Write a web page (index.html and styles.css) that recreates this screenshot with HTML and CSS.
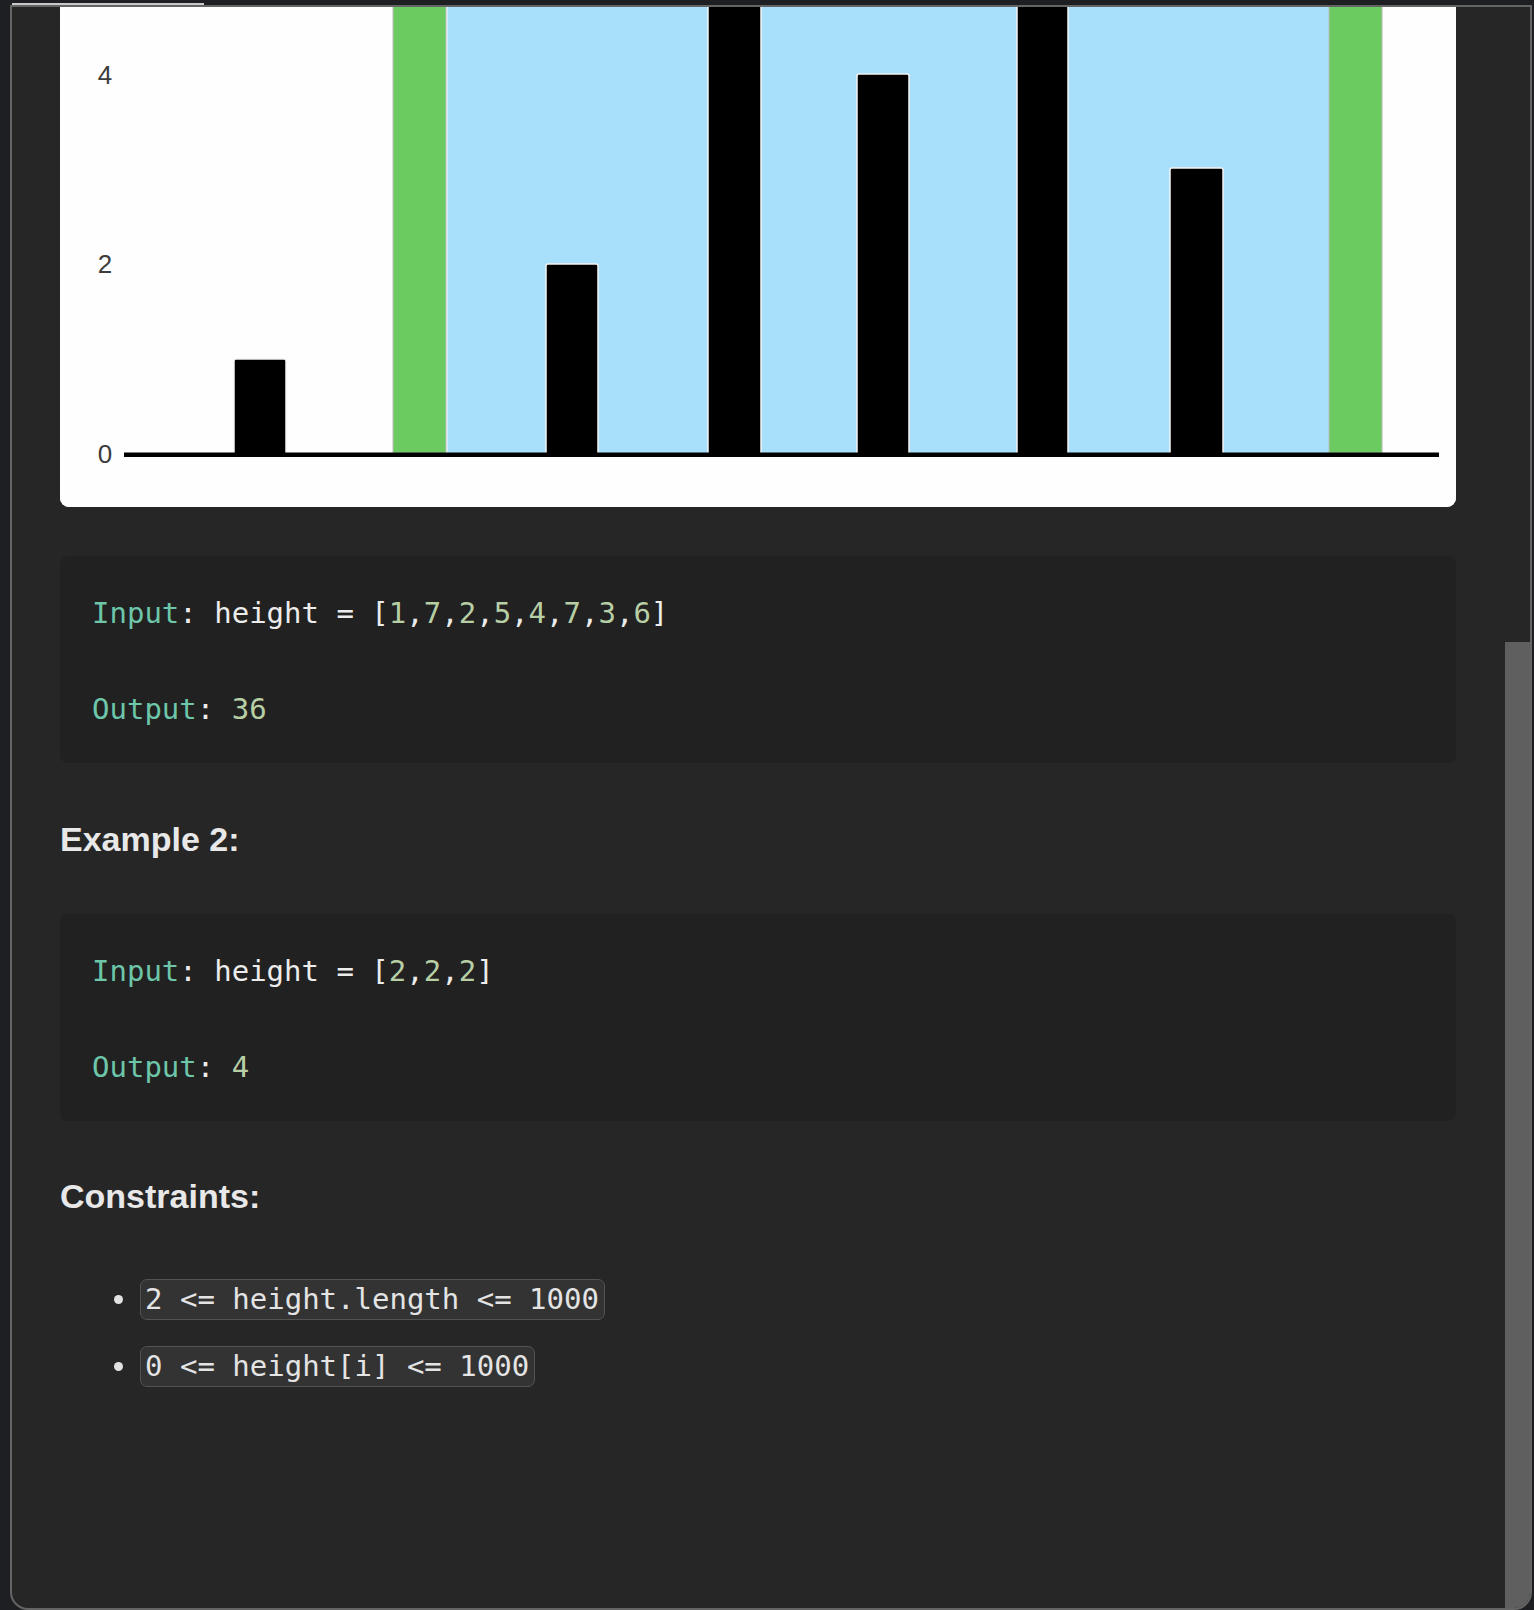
FILE: index.html
```html
<!DOCTYPE html>
<html lang="en">
<head>
<meta charset="utf-8">
<title>Container With Most Water</title>
<link rel="stylesheet" href="styles.css">
</head>
<body>
  <div class="top-strip"><div class="top-thumb"></div></div>
  <div class="panel">
    <div class="content">
      <div class="figure">
        <svg class="chart" width="1396" height="500" viewBox="0 0 1396 500" xmlns="http://www.w3.org/2000/svg">
          <rect x="0" y="0" width="1396" height="500" fill="#fefefe"/>
          <text class="axis" x="45" y="77" text-anchor="middle">4</text>
          <text class="axis" x="45" y="266" text-anchor="middle">2</text>
          <text class="axis" x="45" y="456" text-anchor="middle">0</text>
          <rect x="387.5" y="0" width="882" height="446" fill="#a8dffa"/>
          <rect x="333" y="-20" width="53" height="466" fill="#6bcb60" stroke="#b9b9b9" stroke-width="1"/>
          <rect x="1269" y="-20" width="53" height="466" fill="#6bcb60" stroke="#b9b9b9" stroke-width="1"/>
          <g fill="#000" stroke="#f4f4f4" stroke-width="1.5">
            <rect x="174" y="352" width="52" height="96" rx="2"/>
            <rect x="486" y="257" width="52" height="191" rx="2"/>
            <rect x="648" y="-20" width="53" height="468" rx="2"/>
            <rect x="797" y="67" width="52" height="381" rx="2"/>
            <rect x="957" y="-20" width="51" height="468" rx="2"/>
            <rect x="1110" y="161" width="53" height="287" rx="2"/>
          </g>
          <rect x="64" y="445.5" width="1315" height="4.5" fill="#000"/>
        </svg>
      </div>

      <pre class="code-block"><span class="kw">Input</span>: height = [<span class="num">1</span>,<span class="num">7</span>,<span class="num">2</span>,<span class="num">5</span>,<span class="num">4</span>,<span class="num">7</span>,<span class="num">3</span>,<span class="num">6</span>]

<span class="kw">Output</span>: <span class="num">36</span></pre>

      <h3 class="section-title">Example 2:</h3>

      <pre class="code-block"><span class="kw">Input</span>: height = [<span class="num">2</span>,<span class="num">2</span>,<span class="num">2</span>]

<span class="kw">Output</span>: <span class="num">4</span></pre>

      <h3 class="section-title">Constraints:</h3>

      <ul class="constraints">
        <li><code class="inline-code">2 &lt;= height.length &lt;= 1000</code></li>
        <li><code class="inline-code">0 &lt;= height[i] &lt;= 1000</code></li>
      </ul>
    </div>
    <div class="scrollbar"><div class="thumb"></div></div>
  </div>
</body>
</html>
```

FILE: styles.css
```css
* {
  box-sizing: border-box;
}

html, body {
  margin: 0;
  padding: 0;
}

body {
  width: 1534px;
  height: 1610px;
  overflow: hidden;
  background: #1e1f22;
  font-family: "Liberation Sans", Arial, sans-serif;
}

.top-strip {
  height: 5px;
  padding-top: 3px;
  padding-left: 12px;
}

.top-thumb {
  width: 192px;
  height: 2px;
  background: #c8c8c8;
}

.panel {
  margin-left: 10px;
  width: 1522px;
  height: 1605px;
  border: 2px solid #646464;
  border-radius: 0 0 18px 18px;
  background: #262626;
  overflow: hidden;
  display: flex;
}

.content {
  flex: 1;
  padding: 0 49px 0 48px;
  display: flex;
  flex-direction: column;
}

.figure {
  width: 1396px;
  height: 500px;
  background: #fefefe;
  border-radius: 0 0 9px 9px;
  overflow: hidden;
  flex: none;
}

.chart {
  display: block;
}

.axis {
  font-family: "Liberation Sans", Arial, sans-serif;
  font-size: 26px;
  fill: #3c3c3c;
}

.code-block {
  margin: 49px 0 0 0;
  padding: 33px 32px 30px 32px;
  background: #212121;
  border-radius: 8px;
  font-family: "DejaVu Sans Mono", "Liberation Mono", monospace;
  font-size: 29px;
  line-height: 48px;
  color: #ececec;
  white-space: pre;
}

.section-title + .code-block {
  margin-top: 55px;
}

.kw {
  color: #6dc6a9;
}

.num {
  color: #b8cfa6;
}

.section-title {
  margin: 56px 0 0 0;
  font-family: "Liberation Sans", Arial, sans-serif;
  font-size: 34px;
  line-height: 40px;
  font-weight: 700;
  color: #e8e8e8;
}

.code-block + .section-title + .code-block + .section-title {
  margin-top: 55px;
}

.constraints {
  list-style: none;
  margin: 62px 0 0 0;
  padding: 0 0 0 54px;
}

.constraints li {
  display: flex;
  align-items: center;
  height: 42px;
  margin-bottom: 25px;
}

.constraints li::before {
  content: "";
  width: 9px;
  height: 9px;
  border-radius: 50%;
  background: #e2e2e2;
  margin-right: 17px;
  flex: none;
}

.inline-code {
  display: inline-block;
  font-family: "DejaVu Sans Mono", "Liberation Mono", monospace;
  font-size: 29px;
  line-height: 39px;
  padding: 0 5px 0 4px;
  color: #e4e4e4;
  background: #333333;
  border: 1.5px solid #535353;
  border-radius: 7px;
}

.scrollbar {
  width: 25px;
  flex: none;
  padding-top: 635px;
}

.thumb {
  width: 25px;
  height: 100%;
  background: #5f5f5f;
}
```
